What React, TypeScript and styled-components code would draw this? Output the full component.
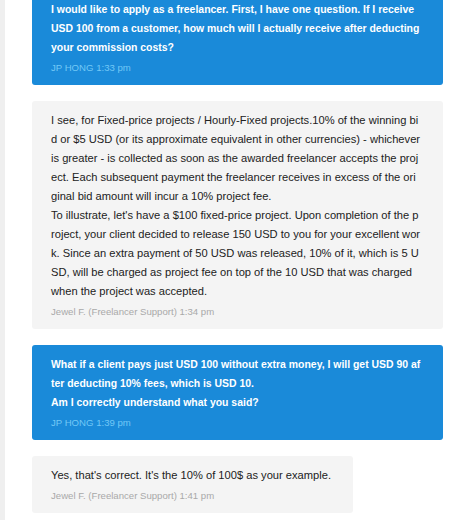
import styled, { createGlobalStyle, css } from "styled-components";

const GlobalStyle = createGlobalStyle`
	html, body {
		margin: 0;
		padding: 0;
		background: #ffffff;
		font-family: "Liberation Sans", Arial, sans-serif;
	}
`;

// Page: the side strip plus the conversation column
const Page = styled.div`
	display: flex;
	width: 466px;
	height: 520px;
	overflow: hidden;
`;

// SideStrip: thin grey bar on the left edge
const SideStrip = styled.div`
	width: 5px;
	flex: none;
	background: #efefef;
`;

// Thread: the column holding every message bubble
const Thread = styled.div`
	flex: 1;
	display: flex;
	flex-direction: column;
	align-items: flex-start;
	gap: 16px;
	padding: 0 23px 0 27px;
	margin-top: -10px; /* first bubble is scrolled past the top */
`;

type Side = "me" | "support";

// Bubble: one message, blue for the customer, grey for support
const Bubble = styled.div<{ $side: Side }>`
	box-sizing: border-box;
	max-width: 100%;
	padding: 10px 22px 8px 19px;
	border-radius: 3px;
	line-height: 19px;
	word-break: break-all;
	${({ $side }) =>
		$side === "me"
			? css`
					background: #1a8ad9;
					color: #ffffff;
					font-weight: bold;
					font-size: 10.45px;
				`
			: css`
					background: #f4f4f4;
					color: #222222;
					font-size: 11.15px;
				`}
`;

const Line = styled.div``;

// Meta: author name and time below the text
const Meta = styled.div<{ $side: Side }>`
	margin-top: 1px;
	font-size: 9.6px;
	font-weight: normal;
	line-height: 19px;
	word-break: normal;
	color: ${({ $side }) => ($side === "me" ? "#72c8f6" : "#a9a9a9")};
`;

type Message = { side: Side; lines: string[]; meta: string };

const messages: Message[] = [
	{
		side: "me",
		lines: [
			"I would like to apply as a freelancer. First, I have one question. If I receive USD 100 from a customer, how much will I actually receive after deducting your commission costs?",
		],
		meta: "JP HONG 1:33 pm",
	},
	{
		side: "support",
		lines: [
			"I see, for Fixed-price projects / Hourly-Fixed projects.10% of the winning bid or $5 USD (or its approximate equivalent in other currencies) - whichever is greater - is collected as soon as the awarded freelancer accepts the project. Each subsequent payment the freelancer receives in excess of the original bid amount will incur a 10% project fee.",
			"To illustrate, let's have a $100 fixed-price project. Upon completion of the project, your client decided to release 150 USD to you for your excellent work. Since an extra payment of 50 USD was released, 10% of it, which is 5 USD, will be charged as project fee on top of the 10 USD that was charged when the project was accepted.",
		],
		meta: "Jewel F. (Freelancer Support) 1:34 pm",
	},
	{
		side: "me",
		lines: [
			"What if a client pays just USD 100 without extra money, I will get USD 90 after deducting 10% fees, which is USD 10.",
			"Am I correctly understand what you said?",
		],
		meta: "JP HONG 1:39 pm",
	},
	{
		side: "support",
		lines: ["Yes, that's correct. It's the 10% of 100$ as your example."],
		meta: "Jewel F. (Freelancer Support) 1:41 pm",
	},
];

const App = () => {
	return (
		<>
			<GlobalStyle />
			<Page>
				<SideStrip />
				<Thread>
					{messages.map((m, i) => (
						<Bubble key={i} $side={m.side}>
							{m.lines.map((l, j) => (
								<Line key={j}>{l}</Line>
							))}
							<Meta $side={m.side}>{m.meta}</Meta>
						</Bubble>
					))}
				</Thread>
			</Page>
		</>
	);
};

export default App;
